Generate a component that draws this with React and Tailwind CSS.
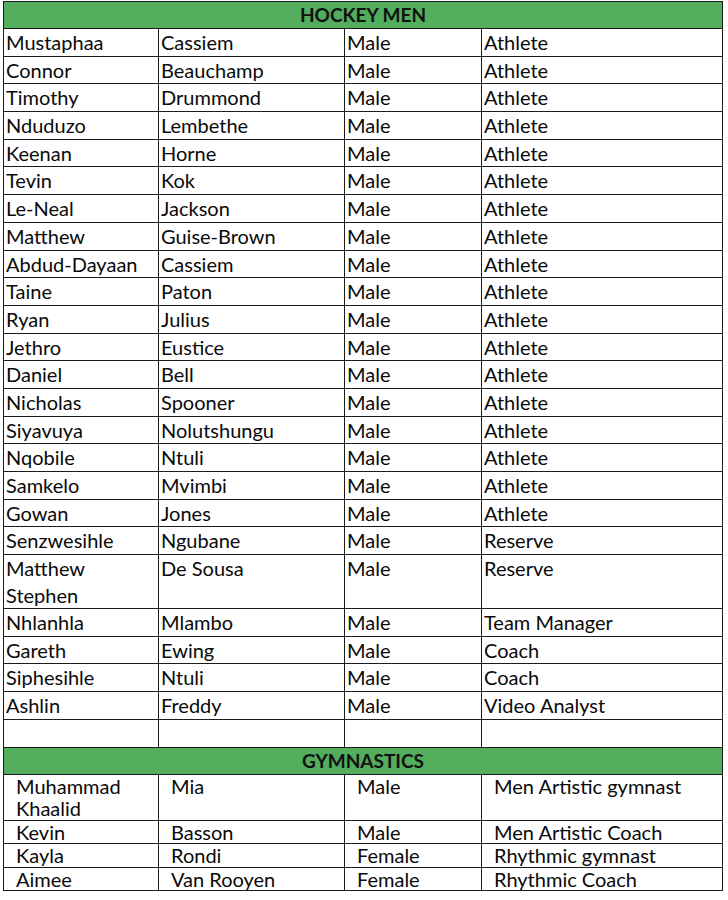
const hockey = [
  ['Mustaphaa', 'Cassiem', 'Male', 'Athlete'],
  ['Connor', 'Beauchamp', 'Male', 'Athlete'],
  ['Timothy', 'Drummond', 'Male', 'Athlete'],
  ['Nduduzo', 'Lembethe', 'Male', 'Athlete'],
  ['Keenan', 'Horne', 'Male', 'Athlete'],
  ['Tevin', 'Kok', 'Male', 'Athlete'],
  ['Le-Neal', 'Jackson', 'Male', 'Athlete'],
  ['Matthew', 'Guise-Brown', 'Male', 'Athlete'],
  ['Abdud-Dayaan', 'Cassiem', 'Male', 'Athlete'],
  ['Taine', 'Paton', 'Male', 'Athlete'],
  ['Ryan', 'Julius', 'Male', 'Athlete'],
  ['Jethro', 'Eustice', 'Male', 'Athlete'],
  ['Daniel', 'Bell', 'Male', 'Athlete'],
  ['Nicholas', 'Spooner', 'Male', 'Athlete'],
  ['Siyavuya', 'Nolutshungu', 'Male', 'Athlete'],
  ['Nqobile', 'Ntuli', 'Male', 'Athlete'],
  ['Samkelo', 'Mvimbi', 'Male', 'Athlete'],
  ['Gowan', 'Jones', 'Male', 'Athlete'],
  ['Senzwesihle', 'Ngubane', 'Male', 'Reserve'],
  ['Matthew Stephen', 'De Sousa', 'Male', 'Reserve'],
  ['Nhlanhla', 'Mlambo', 'Male', 'Team Manager'],
  ['Gareth', 'Ewing', 'Male', 'Coach'],
  ['Siphesihle', 'Ntuli', 'Male', 'Coach'],
  ['Ashlin', 'Freddy', 'Male', 'Video Analyst'],
];

const gym = [
  ['Muhammad Khaalid', 'Mia', 'Male', 'Men Artistic gymnast'],
  ['Kevin', 'Basson', 'Male', 'Men Artistic Coach'],
  ['Kayla', 'Rondi', 'Female', 'Rhythmic gymnast'],
  ['Aimee', 'Van Rooyen', 'Female', 'Rhythmic Coach'],
];

function Header({ title }) {
  return (
    <tr>
      <td
        colSpan={4}
        className="h-[27px] border-[1.5px] border-[#1c1c1c] bg-[#52ad5c] p-0 text-center align-middle text-[19px] leading-[24px] font-bold text-[#111]"
      >
        {title}
      </td>
    </tr>
  );
}

export default function App() {
  return (
    <div className="bg-white pl-[3px] pt-[1px]" style={{ fontFamily: 'Lato, "Liberation Sans", sans-serif' }}>
      <table className="w-[719px] table-fixed border-collapse text-[#0a0a0a]">
        <colgroup>
          <col className="w-[155px]" />
          <col className="w-[186px]" />
          <col className="w-[137px]" />
          <col className="w-[241px]" />
        </colgroup>
        <tbody>
          <Header title="HOCKEY MEN" />
          {hockey.map((r, i) => (
            <tr key={i}>
              {r.map((c, j) => (
                <td
                  key={j}
                  className="h-[27.7px] border-[1.5px] border-[#1c1c1c] py-0 pl-[2px] pr-1 align-top text-[20px] leading-[26.5px]"
                >
                  {c}
                </td>
              ))}
            </tr>
          ))}
          <tr>
            {[0, 1, 2, 3].map((j) => (
              <td key={j} className="h-[28px] border-[1.5px] border-[#1c1c1c] p-0" />
            ))}
          </tr>
          <Header title="GYMNASTICS" />
          {gym.map((r, i) => (
            <tr key={i}>
              {r.map((c, j) => (
                <td
                  key={j}
                  className="h-[23px] border-[1.5px] border-[#1c1c1c] py-0 pl-[12px] pr-1 align-top text-[20px] leading-[22.5px]"
                >
                  {c}
                </td>
              ))}
            </tr>
          ))}
        </tbody>
      </table>
    </div>
  );
}
